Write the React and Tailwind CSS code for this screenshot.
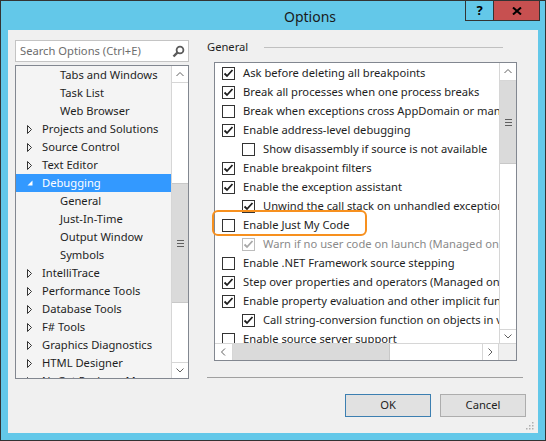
import React from 'react'

const tree = [
  { t: 'Tabs and Windows', l: 2 },
  { t: 'Task List', l: 2 },
  { t: 'Web Browser', l: 2 },
  { t: 'Projects and Solutions', l: 1 },
  { t: 'Source Control', l: 1 },
  { t: 'Text Editor', l: 1 },
  { t: 'Debugging', l: 1, open: true },
  { t: 'General', l: 2 },
  { t: 'Just-In-Time', l: 2 },
  { t: 'Output Window', l: 2 },
  { t: 'Symbols', l: 2 },
  { t: 'IntelliTrace', l: 1 },
  { t: 'Performance Tools', l: 1 },
  { t: 'Database Tools', l: 1 },
  { t: 'F# Tools', l: 1 },
  { t: 'Graphics Diagnostics', l: 1 },
  { t: 'HTML Designer', l: 1 },
  { t: 'NuGet Package Manager', l: 1 },
]

const options = [
  { t: 'Ask before deleting all breakpoints', on: true },
  { t: 'Break all processes when one process breaks', on: true },
  { t: 'Break when exceptions cross AppDomain or managed/native boundaries' },
  { t: 'Enable address-level debugging', on: true },
  { t: 'Show disassembly if source is not available', sub: true },
  { t: 'Enable breakpoint filters', on: true },
  { t: 'Enable the exception assistant', on: true },
  { t: 'Unwind the call stack on unhandled exceptions', on: true, sub: true },
  { t: 'Enable Just My Code' },
  { t: 'Warn if no user code on launch (Managed only)', on: true, sub: true, off: true },
  { t: 'Enable .NET Framework source stepping' },
  { t: 'Step over properties and operators (Managed only)', on: true },
  { t: 'Enable property evaluation and other implicit function calls', on: true },
  { t: 'Call string-conversion function on objects in variables windows', on: true, sub: true },
  { t: 'Enable source server support' },
]

function Chevron({ dir }) {
  const pts = {
    up: '0.5,4 4,0.5 7.5,4',
    down: '0.5,0.5 4,4 7.5,0.5',
    left: '4,0.5 0.5,4 4,7.5',
    right: '0.5,0.5 4,4 0.5,7.5',
  }[dir]
  const vert = dir === 'up' || dir === 'down'
  return (
    <svg width={vert ? 8 : 5} height={vert ? 5 : 8} viewBox={vert ? '0 0 8 5' : '0 0 5 8'}>
      <polyline points={pts} fill="none" stroke="#606060" strokeWidth="1" />
    </svg>
  )
}

function Grip() {
  return (
    <div className="flex flex-col gap-[2px]">
      <div className="w-[7px] h-px bg-[#606060]" />
      <div className="w-[7px] h-px bg-[#606060]" />
      <div className="w-[7px] h-px bg-[#606060]" />
    </div>
  )
}

function Check({ on, off }) {
  return (
    <div className={`w-[13px] h-[13px] shrink-0 border bg-white flex items-center justify-center ${off ? 'border-[#bcbcbc]' : 'border-[#333333]'}`}>
      {on && (
        <svg width="11" height="11" viewBox="0 0 11 11">
          <polyline points="1.5,5.5 4,8 9.5,2" fill="none" stroke={off ? '#a8a8a8' : '#1e1e1e'} strokeWidth="1.8" />
        </svg>
      )}
    </div>
  )
}

export default function App() {
  return (
    <div className="w-[546px] h-[441px] bg-[#63c8e9] border border-[#333333] flex flex-col font-['Noto_Sans',sans-serif] text-[#1e1e1e] overflow-hidden">
      {/* title bar */}
      <div className="flex h-[29px] shrink-0">
        <div className="flex-1 pl-[283px] pt-[5px] text-[14px] text-[#1a1a1a]">Options</div>
        <div className="flex h-[21px] mr-[5px] -mt-px">
          <div className="w-[29px] border border-[#333333] flex items-center justify-center text-[13px] font-bold text-black">?</div>
          <div className="w-[46px] border border-l-0 border-[#333333] bg-[#c75050] flex items-center justify-center">
            <svg width="10" height="8" viewBox="0 0 10 8">
              <path d="M1 0.5 L9 7.5 M9 0.5 L1 7.5" stroke="#000" strokeWidth="2" />
            </svg>
          </div>
        </div>
      </div>

      {/* client area */}
      <div className="mx-[7px] mb-[7px] flex-1 bg-[#f0f0f0] flex flex-col relative text-[11.2px]">
        <div className="flex h-[350px]">
          {/* left */}
          <div className="ml-[7px] w-[174px] pt-[10px] flex flex-col">
            <div className="h-[22px] bg-white border border-[#c4c4c4] flex items-center pl-[4px] pr-[3px]">
              <span className="flex-1 text-[#6d6d6d]">Search Options (Ctrl+E)</span>
              <svg width="13" height="13" viewBox="0 0 13 13">
                <circle cx="8" cy="5" r="3.4" fill="none" stroke="#5a5a5a" strokeWidth="1.8" />
                <path d="M5.6 7.4 L1.5 11.5" stroke="#5a5a5a" strokeWidth="2.4" />
              </svg>
            </div>
            <div className="mt-[3px] h-[314px] border border-[#828790] bg-[#f4f4f4] flex overflow-hidden">
              <div className="flex-1 overflow-hidden">
                {tree.map(r => (
                  <div
                    key={r.t}
                    className={`h-[18px] flex items-center whitespace-nowrap ${r.open ? 'bg-[#3399ff] text-white' : ''}`}
                  >
                    {r.l === 1 ? (
                      <div className="w-[26px] pl-[11px] flex items-center shrink-0">
                        {r.open ? (
                          <svg width="6" height="6" viewBox="0 0 6 6">
                            <polygon points="5.5,0.5 5.5,5.5 0.5,5.5" fill="#ffffff" />
                          </svg>
                        ) : (
                          <svg width="6" height="9" viewBox="0 0 6 9">
                            <polygon points="0.5,0.5 4.5,4.5 0.5,8.5" fill="none" stroke="#333" strokeWidth="1" />
                          </svg>
                        )}
                      </div>
                    ) : (
                      <div className="w-[44px] shrink-0" />
                    )}
                    <span>{r.t}</span>
                  </div>
                ))}
              </div>
              <div className="w-[17px] bg-white border-l border-[#d6d6d6] flex flex-col">
                <div className="h-[17px] border-b border-[#d6d6d6] flex items-center justify-center">
                  <Chevron dir="up" />
                </div>
                <div className="h-[100px]" />
                <div className="h-[120px] bg-[#dadada] border-y border-[#c8c8c8] flex items-center justify-center">
                  <Grip />
                </div>
                <div className="flex-1" />
                <div className="h-[16px] border-t border-[#d6d6d6] flex items-center justify-center">
                  <Chevron dir="down" />
                </div>
              </div>
            </div>
          </div>

          {/* right */}
          <div className="ml-[18px] w-[316px] pt-[9px] flex flex-col relative">
            <div className="h-[16px] flex items-center mr-[20px]">
              <span>General</span>
              <div className="flex-1 ml-[16px] h-px bg-[#c0c0c0]" />
            </div>
            <div className="mt-[7px] ml-[7px] w-[303px] h-[299px] border border-[#828790] bg-white flex flex-col overflow-hidden">
              <div className="flex flex-1 min-h-0">
                <div className="flex-1 overflow-hidden pt-px">
                  {options.map(o => (
                    <div
                      key={o.t}
                      className={`h-[19px] flex items-center whitespace-nowrap ${o.sub ? 'pl-[27px]' : 'pl-[7px]'} ${o.off ? 'text-[#8a8a8a]' : ''}`}
                    >
                      <Check on={o.on} off={o.off} />
                      <span className="ml-[8px]">{o.t}</span>
                    </div>
                  ))}
                </div>
                <div className="w-[17px] border-l border-[#d6d6d6] flex flex-col">
                  <div className="h-[18px] border-b border-[#d6d6d6] flex items-center justify-center">
                    <Chevron dir="up" />
                  </div>
                  <div className="h-[83px] bg-[#dadada] border-b border-[#c8c8c8] flex items-center justify-center">
                    <Grip />
                  </div>
                  <div className="flex-1" />
                  <div className="h-[14px] border-t border-[#d6d6d6] flex items-center justify-center">
                    <Chevron dir="down" />
                  </div>
                </div>
              </div>
              <div className="h-[17px] flex border-t border-[#d6d6d6] shrink-0">
                <div className="w-[18px] border-r border-[#d6d6d6] flex items-center justify-center">
                  <Chevron dir="left" />
                </div>
                <div className="w-[157px] bg-[#dadada] border-r border-[#c8c8c8]" />
                <div className="flex-1" />
                <div className="w-[16px] border-l border-[#d6d6d6] flex items-center justify-center">
                  <Chevron dir="right" />
                </div>
                <div className="w-[18px] border-l border-[#d6d6d6] bg-[#f0f0f0]" />
              </div>
            </div>
            <div className="mt-[16px] h-px bg-[#a0a0a0]" />

            {/* highlight */}
            <div className="absolute left-[5px] top-[180px] w-[155px] h-[26px] rounded-[6px] border-2 border-[#f7901e]" />
          </div>
        </div>

        {/* buttons */}
        <div className="mt-[14px] flex justify-end gap-[9px] pr-[12px]">
          <div className="w-[86px] h-[23px] bg-[#e1e1e1] border border-[#3c7fb1] flex items-center justify-center">OK</div>
          <div className="w-[86px] h-[23px] bg-[#e1e1e1] border border-[#adadad] flex items-center justify-center">Cancel</div>
        </div>

        {/* resize grip */}
        <svg className="absolute right-[4px] bottom-[3px]" width="8" height="8" viewBox="0 0 8 8">
          <rect x="6" y="0" width="1.5" height="1.5" fill="#b0b0b0" />
          <rect x="3" y="3" width="1.5" height="1.5" fill="#b0b0b0" />
          <rect x="6" y="3" width="1.5" height="1.5" fill="#b0b0b0" />
          <rect x="0" y="6" width="1.5" height="1.5" fill="#b0b0b0" />
          <rect x="3" y="6" width="1.5" height="1.5" fill="#b0b0b0" />
          <rect x="6" y="6" width="1.5" height="1.5" fill="#b0b0b0" />
        </svg>
      </div>
    </div>
  )
}
